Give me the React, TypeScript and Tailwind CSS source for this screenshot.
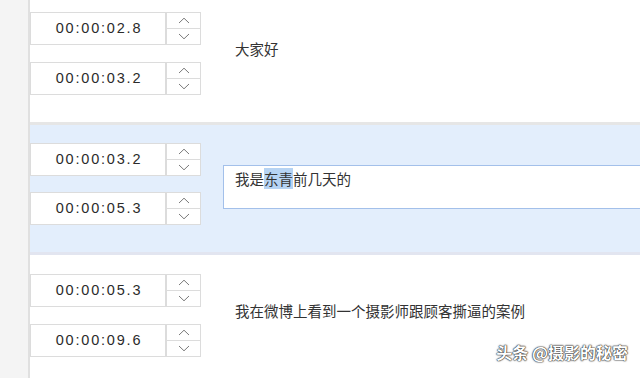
import React from "react";

function Chevron({ up }: { up?: boolean }) {
  return (
    <svg width="12" height="7" viewBox="0 0 12 7" className="block">
      <path
        d={up ? "M1 6 L6 1.2 L11 6" : "M1 1 L6 5.8 L11 1"}
        fill="none"
        stroke="#7a7a7a"
        strokeWidth="1"
      />
    </svg>
  );
}

function TimeInput({ value }: { value: string }) {
  return (
    <div className="flex h-[33px]">
      <div className="w-[136px] h-full border border-[#dcdcdc] bg-white flex items-center justify-center">
        <span
          className="text-[14.5px] text-[#2b2b2b] tracking-[1.8px] pl-[2px]"
          style={{ fontFamily: '"Liberation Sans", Arial, sans-serif' }}
        >
          {value}
        </span>
      </div>
      <div className="w-[35px] h-full border border-[#dcdcdc] bg-white flex flex-col">
        <div className="flex-1 flex items-center justify-center border-b border-[#dcdcdc]">
          <Chevron up />
        </div>
        <div className="flex-1 flex items-center justify-center">
          <Chevron />
        </div>
      </div>
    </div>
  );
}

function Row({
  start,
  end,
  children,
  active,
  pt,
  pb,
  gap,
}: {
  start: string;
  end: string;
  children: React.ReactNode;
  active?: boolean;
  pt: string;
  pb: string;
  gap: string;
}) {
  return (
    <div
      className={
        "flex items-center " + (active ? "bg-[#e3eefc] " : "bg-white ") + pt + " " + pb
      }
    >
      <div className={"flex flex-col shrink-0 " + gap}>
        <TimeInput value={start} />
        <TimeInput value={end} />
      </div>
      <div
        className={
          "ml-[22px] mt-[6px] h-[44px] w-[440px] shrink-0 pl-[11px] pt-[3px] text-[14.5px] leading-[20px] text-[#333] " +
          (active ? "border border-[#a3c0ea] bg-white" : "border border-transparent")
        }
        style={{ fontFamily: '"Noto Sans CJK SC", "Noto Sans", sans-serif' }}
      >
        {children}
      </div>
    </div>
  );
}

export default function App() {
  return (
    <div className="relative w-[640px] h-[378px] overflow-hidden bg-white flex">
      <div className="w-[30px] shrink-0 bg-[#f4f4f4] border-r-2 border-[#e0e0e0]" />
      <div className="flex-1 flex flex-col overflow-hidden">
        <Row start="00:00:02.8" end="00:00:03.2" pt="pt-[12px]" pb="pb-[27px]" gap="gap-[17px]">
          大家好
        </Row>
        <div className="h-[3px] bg-[#e6e6e6] shrink-0" />
        <Row
          start="00:00:03.2"
          end="00:00:05.3"
          active
          pt="pt-[18px]"
          pb="pb-[27px]"
          gap="gap-[16px]"
        >
          我是<span className="bg-[#b6d3f3]">东青</span>前几天的
        </Row>
        <div className="h-[3px] bg-[#e2e5f0] shrink-0" />
        <Row start="00:00:05.3" end="00:00:09.6" pt="pt-[19px]" pb="pb-[20px]" gap="gap-[17px]">
          我在微博上看到一个摄影师跟顾客撕逼的案例
        </Row>
      </div>
      <div
        className="absolute right-[12px] bottom-[18px] text-[16px] font-bold text-white leading-none [text-shadow:0_0_2px_#333,0_0_1px_#222,0_0_1px_#222]"
        style={{ fontFamily: '"Noto Sans CJK SC", sans-serif' }}
      >
        头条 @摄影的秘密
      </div>
    </div>
  );
}
